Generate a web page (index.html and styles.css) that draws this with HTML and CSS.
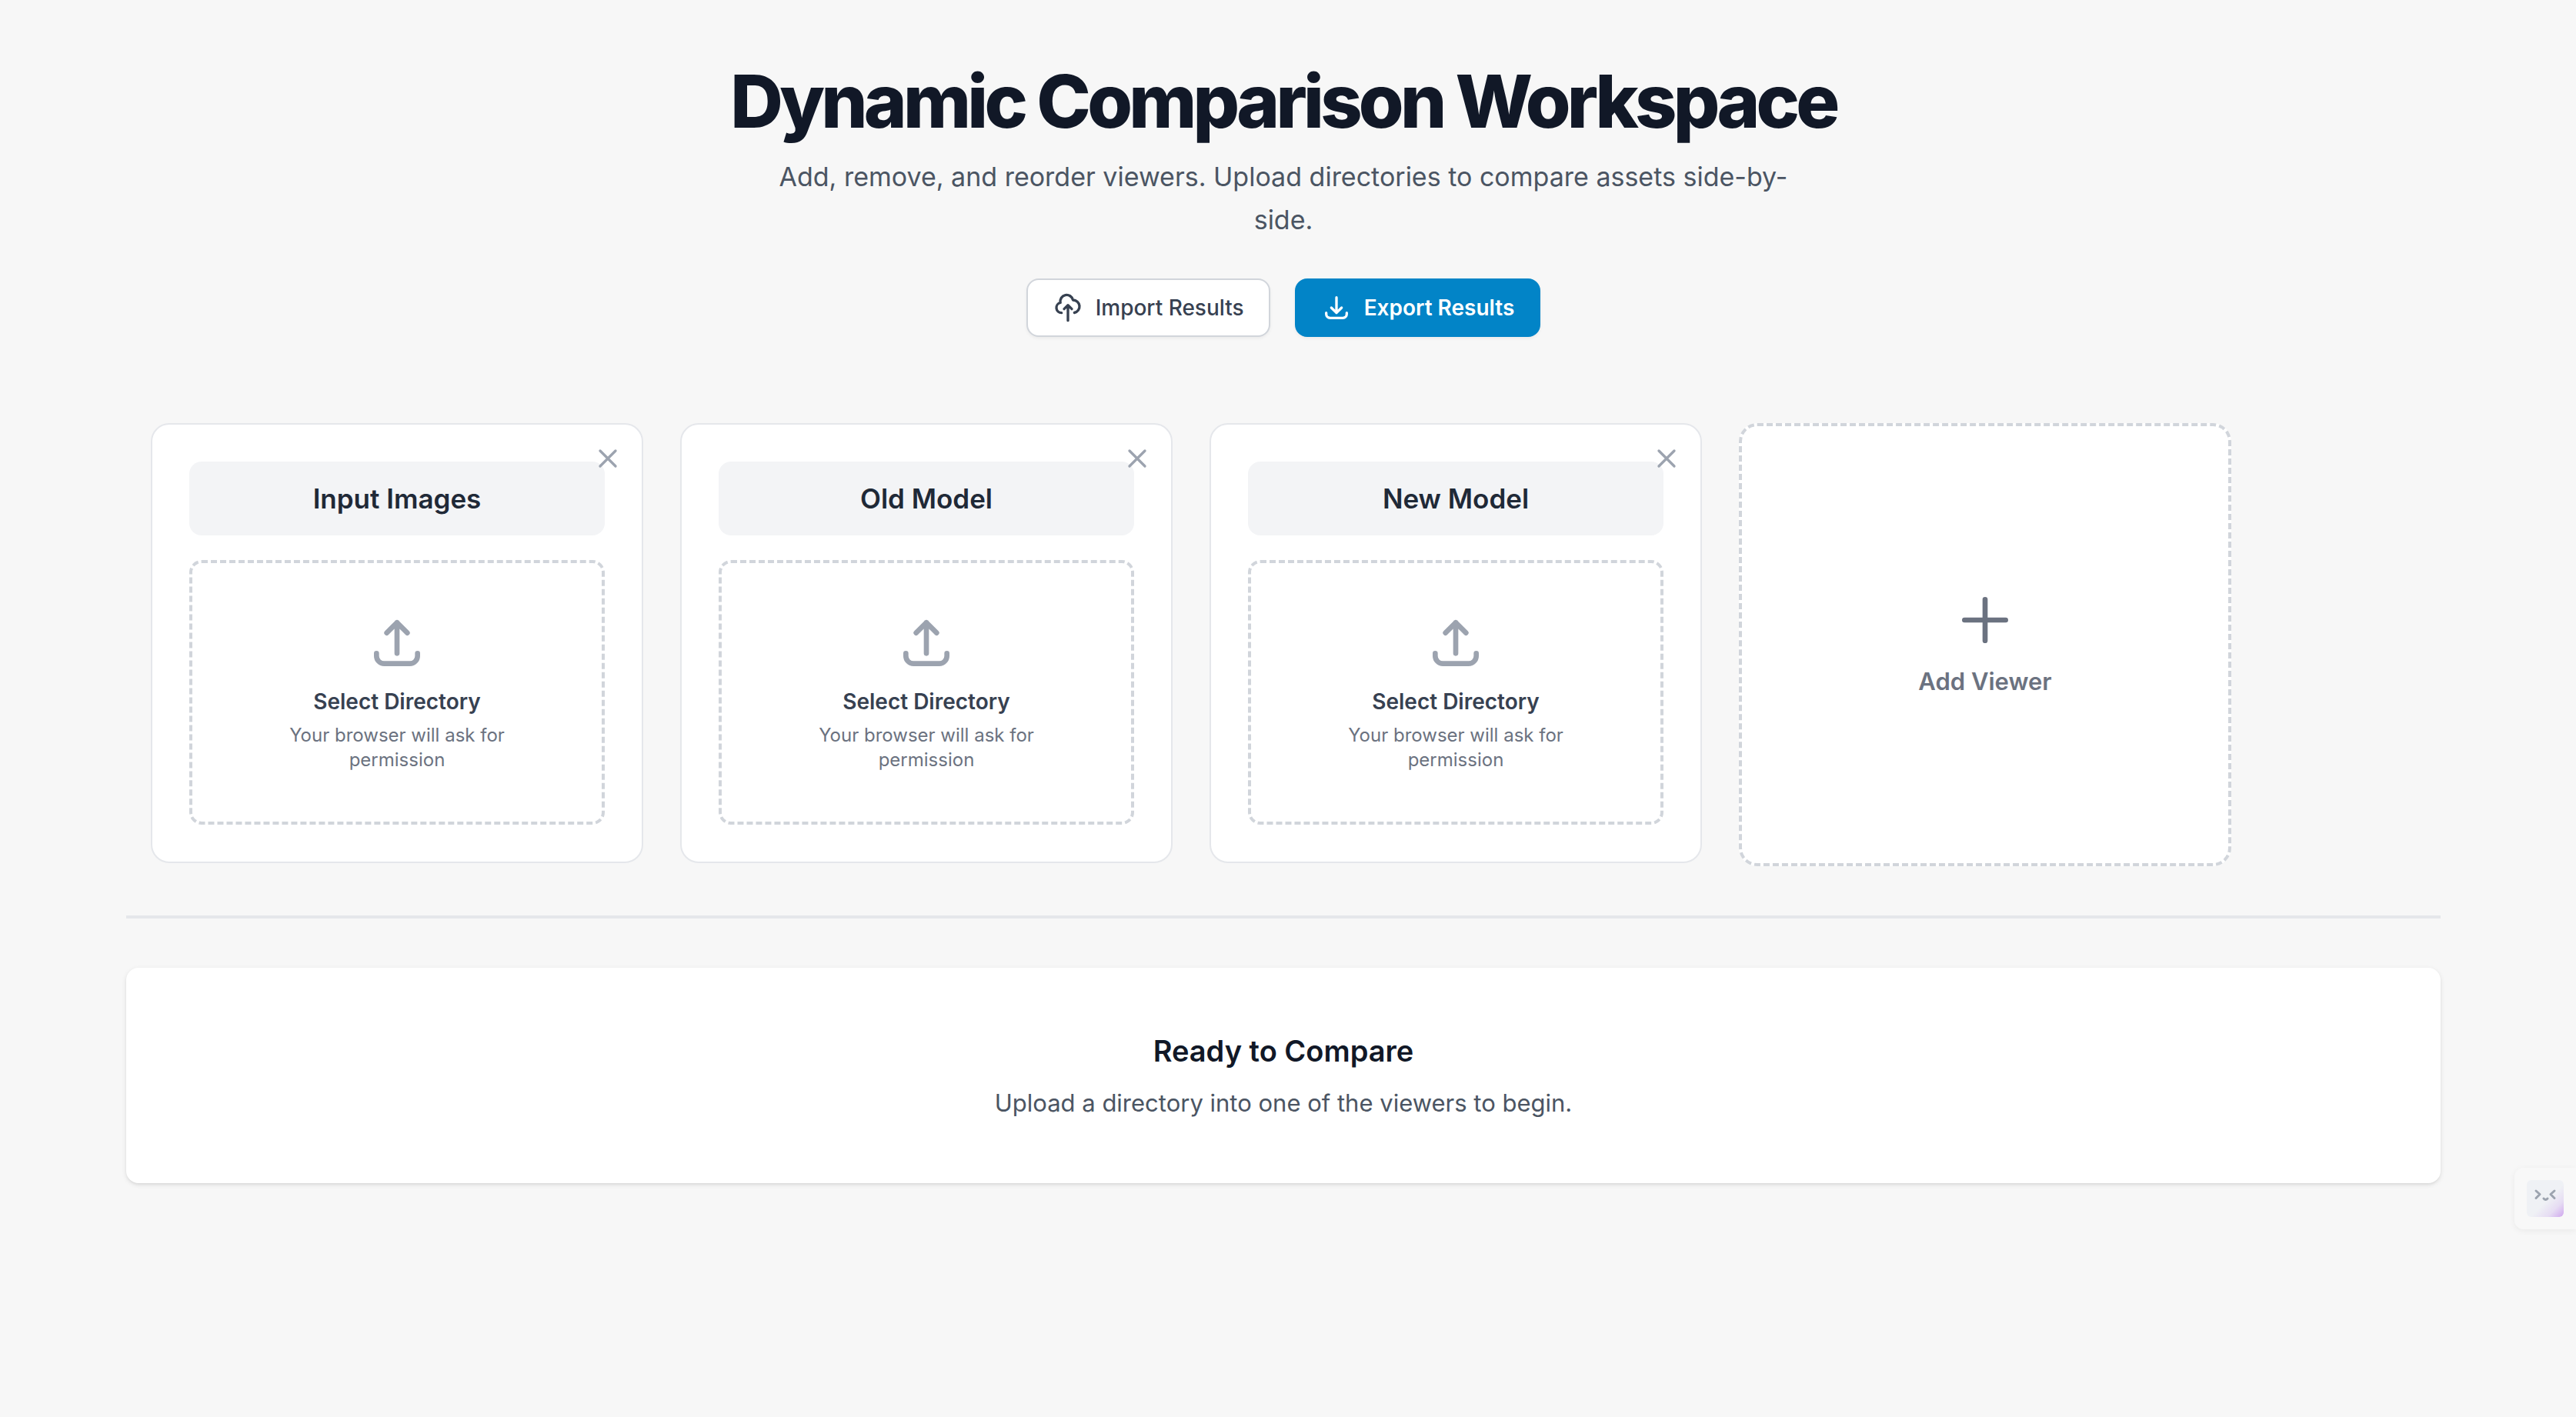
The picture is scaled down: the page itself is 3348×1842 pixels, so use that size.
FILE: index.html
```html
<!DOCTYPE html>
<html lang="en">
<head>
<meta charset="utf-8">
<meta name="viewport" content="width=device-width, initial-scale=1">
<title>Dynamic Comparison Workspace</title>
<link rel="stylesheet" href="styles.css">
</head>
<body>
<svg class="sprite" aria-hidden="true">
  <symbol id="tray-up" viewBox="0 0 24 24"><path d="M4 16v1a3 3 0 0 0 3 3h10a3 3 0 0 0 3-3v-1m-4-8-4-4m0 0L8 8m4-4v12"/></symbol>
  <symbol id="close" viewBox="0 0 24 24"><path d="M6 18 18 6M6 6l12 12"/></symbol>
</svg>
<main class="page">
  <header class="hero">
    <h1 class="hero-title">Dynamic Comparison Workspace</h1>
    <p class="hero-text">Add, remove, and reorder viewers. Upload directories to compare assets side-by-side.</p>
    <div class="actions">
      <button class="button button-light" type="button">
        <svg class="icon button-icon" viewBox="0 0 24 24" aria-hidden="true"><path d="M7 16a4 4 0 0 1-.88-7.903A5 5 0 1 1 15.9 6L16 6a5 5 0 0 1 1 9.9M15 13l-3-3m0 0-3 3m3-3v12"/></svg>
        Import Results
      </button>
      <button class="button button-primary" type="button">
        <svg class="icon button-icon" viewBox="0 0 24 24" aria-hidden="true"><path d="M4 16v1a3 3 0 0 0 3 3h10a3 3 0 0 0 3-3v-1m-4-4-4 4m0 0-4-4m4 4V4"/></svg>
        Export Results
      </button>
    </div>
  </header>

  <section class="viewers" aria-label="Viewers">
    <article class="viewer">
      <button class="viewer-close" type="button" aria-label="Remove Input Images"><svg class="icon" viewBox="0 0 24 24" aria-hidden="true"><use href="#close"/></svg></button>
      <input class="viewer-name" type="text" value="Input Images" aria-label="Viewer name">
      <button class="dropzone" type="button">
        <svg class="icon large-icon dropzone-icon" viewBox="0 0 24 24" aria-hidden="true"><use href="#tray-up"/></svg>
        <span class="dropzone-title">Select Directory</span>
        <span class="dropzone-hint">Your browser will ask for permission</span>
      </button>
    </article>
    <article class="viewer">
      <button class="viewer-close" type="button" aria-label="Remove Old Model"><svg class="icon" viewBox="0 0 24 24" aria-hidden="true"><use href="#close"/></svg></button>
      <input class="viewer-name" type="text" value="Old Model" aria-label="Viewer name">
      <button class="dropzone" type="button">
        <svg class="icon large-icon dropzone-icon" viewBox="0 0 24 24" aria-hidden="true"><use href="#tray-up"/></svg>
        <span class="dropzone-title">Select Directory</span>
        <span class="dropzone-hint">Your browser will ask for permission</span>
      </button>
    </article>
    <article class="viewer">
      <button class="viewer-close" type="button" aria-label="Remove New Model"><svg class="icon" viewBox="0 0 24 24" aria-hidden="true"><use href="#close"/></svg></button>
      <input class="viewer-name" type="text" value="New Model" aria-label="Viewer name">
      <button class="dropzone" type="button">
        <svg class="icon large-icon dropzone-icon" viewBox="0 0 24 24" aria-hidden="true"><use href="#tray-up"/></svg>
        <span class="dropzone-title">Select Directory</span>
        <span class="dropzone-hint">Your browser will ask for permission</span>
      </button>
    </article>
    <button class="add-viewer" type="button">
      <svg class="icon large-icon" viewBox="0 0 24 24" aria-hidden="true"><path d="M12 4v16m8-8H4"/></svg>
      Add Viewer
    </button>
  </section>

  <section class="status">
    <h2 class="status-title">Ready to Compare</h2>
    <p class="status-text">Upload a directory into one of the viewers to begin.</p>
  </section>
</main>

<button class="assistant" type="button" aria-label="Open assistant">
  <span class="assistant-face">
    <svg viewBox="0 0 48 48" fill="none" stroke="#9ca3af" stroke-width="3" stroke-linecap="round" stroke-linejoin="round" aria-hidden="true"><path d="M12 14l5 4.500-5 5M36 14l-5 4.500 5 5M22 24q2.500 3 5 0"/></svg>
  </span>
</button>
</body>
</html>
```

FILE: styles.css
```css
* {
  box-sizing: border-box;
}

body {
  margin: 0;
  padding-right: 12px;
  min-height: 100vh;
  background: #f7f7f7;
  color: #111827;
  font-family: Inter, "Liberation Sans", sans-serif;
}

h1, h2, p {
  margin: 0;
}

button, input {
  font: inherit;
  color: inherit;
}

button {
  cursor: pointer;
}

.sprite {
  position: absolute;
  width: 0;
  height: 0;
}

.icon {
  fill: none;
  stroke: currentColor;
  stroke-width: 2;
  stroke-linecap: round;
  stroke-linejoin: round;
}

.page {
  max-width: 3072px;
  margin: 0 auto;
  padding: 80px 32px;
}

.hero {
  display: flex;
  flex-direction: column;
  align-items: center;
  margin-bottom: 80px;
  text-align: center;
}

.hero-title {
  font-size: 95px;
  line-height: 104px;
  font-weight: 800;
  letter-spacing: -0.05em;
}

.hero-text {
  max-width: 1344px;
  margin-top: 18px;
  font-size: 34px;
  line-height: 56px;
  color: #4b5563;
}

.actions {
  display: flex;
  gap: 32px;
  margin-top: 48px;
}

.button {
  display: flex;
  align-items: center;
  gap: 16px;
  padding: 16px 32px;
  border: 2px solid transparent;
  border-radius: 16px;
  font-size: 28px;
  line-height: 40px;
  box-shadow: 0 2px 4px rgba(0, 0, 0, 0.05);
}

.button-light {
  border-color: #d1d5db;
  background: #fff;
  color: #374151;
  font-weight: 500;
}

.button-primary {
  border-color: #0284c7;
  background: #0284c7;
  color: #fff;
  font-weight: 600;
}

.button-icon {
  width: 40px;
  height: 40px;
}

.viewers {
  display: flex;
  align-items: flex-start;
  gap: 48px;
  padding: 32px 32px 64px;
  border-bottom: 4px solid #e5e7eb;
}

.viewer {
  position: relative;
  display: flex;
  flex-direction: column;
  flex: 0 0 640px;
  gap: 32px;
  padding: 48px;
  border: 2px solid #e5e7eb;
  border-radius: 24px;
  background: #fff;
}

.viewer-close {
  position: absolute;
  top: 24px;
  right: 24px;
  width: 40px;
  height: 40px;
  padding: 0;
  border: 0;
  background: none;
  color: #9ca3af;
}

.viewer-close svg {
  display: block;
}

.viewer-name {
  width: 100%;
  height: 96px;
  padding: 16px;
  border: 4px solid transparent;
  border-radius: 16px;
  background: #f3f4f6;
  color: #1f2937;
  font-size: 35px;
  line-height: 56px;
  font-weight: 600;
  text-align: center;
}

.dropzone {
  display: flex;
  flex-direction: column;
  align-items: center;
  padding: 64px;
  border: 4px dashed #d1d5db;
  border-radius: 16px;
  background: #fff;
}

.large-icon {
  width: 80px;
  height: 80px;
}

.dropzone-icon {
  color: #9ca3af;
}

.dropzone-title {
  margin-top: 16px;
  color: #374151;
  font-size: 28px;
  line-height: 40px;
  font-weight: 600;
}

.dropzone-hint {
  max-width: 320px;
  margin-top: 8px;
  color: #6b7280;
  font-size: 24px;
  line-height: 32px;
}

.add-viewer {
  display: flex;
  flex-direction: column;
  align-items: center;
  justify-content: center;
  flex: 0 0 640px;
  gap: 16px;
  min-height: 576px;
  border: 4px dashed #d1d5db;
  border-radius: 24px;
  background: #fff;
  color: #6b7280;
  font-size: 31px;
  line-height: 48px;
  font-weight: 600;
}

.status {
  margin-top: 64px;
  padding: 80px;
  border-radius: 16px;
  background: #fff;
  text-align: center;
  box-shadow: 0 2px 6px rgba(0, 0, 0, 0.1), 0 2px 4px -2px rgba(0, 0, 0, 0.1);
}

.status-title {
  font-size: 38px;
  line-height: 56px;
  font-weight: 600;
}

.status-text {
  margin-top: 16px;
  color: #4b5563;
  font-size: 31px;
  line-height: 48px;
}

.assistant {
  position: fixed;
  right: 0;
  bottom: 244px;
  padding: 16px;
  border: 0;
  border-radius: 12px 0 0 12px;
  background: #f8f8f8;
  box-shadow: 0 2px 8px rgba(0, 0, 0, 0.06);
}

.assistant-face {
  display: block;
  width: 48px;
  height: 48px;
  border-radius: 6px;
  background: linear-gradient(135deg, #eff1f5 55%, #e6dcf3 78%, #cfa6ee);
}

.assistant-face svg {
  display: block;
}
```
